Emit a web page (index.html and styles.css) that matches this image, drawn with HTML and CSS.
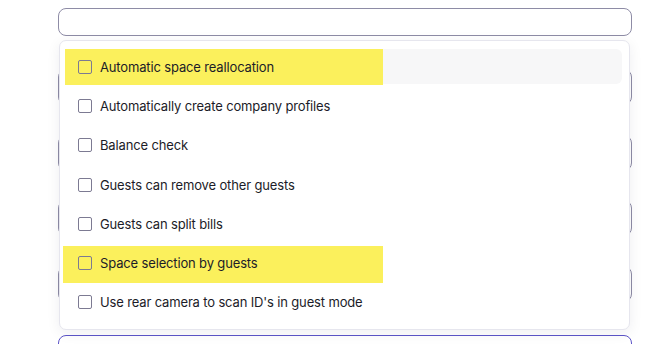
FILE: index.html
```html
<!DOCTYPE html>
<html>
<head>
	<meta charset="UTF-8">
	<link rel="stylesheet" href="styles.css">
</head>
<body>
	<div class="form">
		<div class="field">
			<div class="input"></div>

			<div class="dropdown">
				<div class="option hover">
					<span class="mark"></span>
					<span class="box"></span>
					<span class="label">Automatic space reallocation</span>
				</div>
				<div class="option">
					<span class="box"></span>
					<span class="label">Automatically create company profiles</span>
				</div>
				<div class="option">
					<span class="box"></span>
					<span class="label">Balance check</span>
				</div>
				<div class="option">
					<span class="box"></span>
					<span class="label">Guests can remove other guests</span>
				</div>
				<div class="option">
					<span class="box"></span>
					<span class="label">Guests can split bills</span>
				</div>
				<div class="option">
					<span class="mark tall"></span>
					<span class="box"></span>
					<span class="label">Space selection by guests</span>
				</div>
				<div class="option">
					<span class="box"></span>
					<span class="label">Use rear camera to scan ID's in guest mode</span>
				</div>
			</div>
		</div>

		<div class="input under first"></div>
		<div class="input under"></div>
		<div class="input under"></div>
		<div class="input under"></div>
		<div class="input focused"></div>
	</div>
</body>
</html>
```

FILE: styles.css
```css
body {
	margin: 0;
	background: #ffffff;
	font-family: Inter, "Noto Sans", sans-serif;
	color: #1c1c28;
	overflow: hidden;
}

.form {
	width: 574px;
	margin-left: 58px;
	padding-top: 8px;
	display: flex;
	flex-direction: column;
	gap: 29.5px;
}

.field {
	position: relative;
}

.input {
	box-sizing: border-box;
	height: 28px;
	border: 1px solid #8e8ca6;
	border-radius: 8px;
	background: #fff;
}

.input.under {
	height: 36px;
}

.input.under.first {
	margin-top: 3.5px;
}

.input.focused {
	border: 1.5px solid #5d55c8;
	height: 36px;
	margin-top: 4px;
}

.dropdown {
	position: absolute;
	z-index: 2;
	top: 32px;
	left: 1px;
	width: 571px;
	box-sizing: border-box;
	padding: 8px 7px 9px 5px;
	background: #fff;
	border: 1px solid #e6e6ee;
	border-radius: 7px;
	box-shadow: 0 3px 14px rgba(30, 30, 60, 0.07);
	display: flex;
	flex-direction: column;
	gap: 4px;
}

.option {
	position: relative;
	height: 35.3px;
	display: flex;
	align-items: center;
	padding-left: 13px;
	font-size: 13px;
	letter-spacing: -0.15px;
	border-radius: 6px;
}

.option.hover {
	background: #f7f7f8;
}

.mark {
	position: absolute;
	left: 0;
	top: 0;
	width: 318px;
	height: 36px;
	background: #fbf05c;
}

.mark.tall {
	left: -2px;
	top: 1px;
	width: 320px;
	height: 37px;
}

.box {
	position: relative;
	box-sizing: border-box;
	width: 14px;
	height: 14px;
	border: 1px solid #7c7a92;
	border-radius: 2px;
	margin-right: 8px;
}

.label {
	position: relative;
}
```
